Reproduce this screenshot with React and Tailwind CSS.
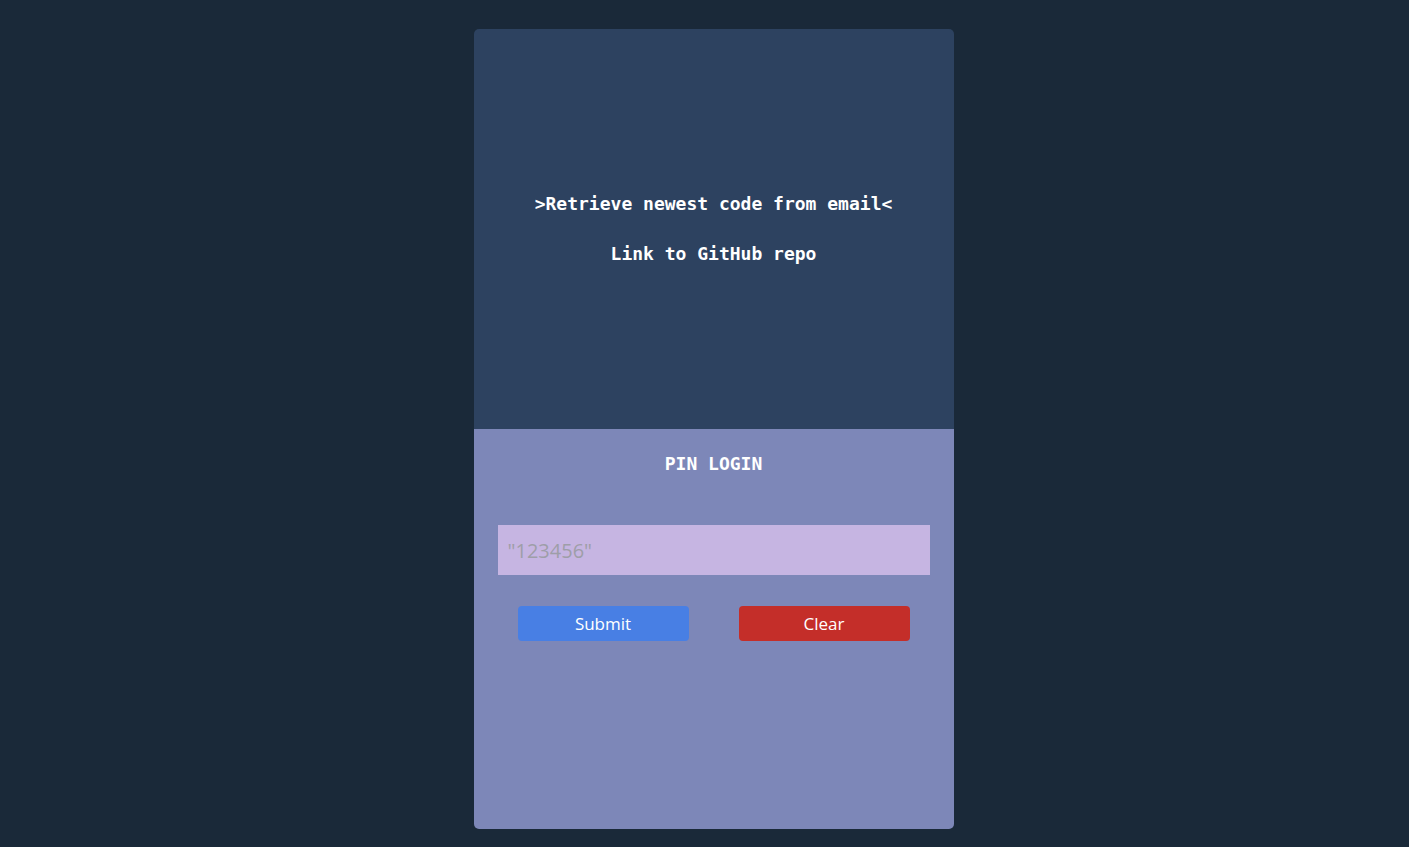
export default function App() {
  return (
    <div className="flex min-h-screen w-full justify-center bg-[#1a2939] pl-[18px] pt-[29px]">
      <div className="flex h-[800px] w-[480px] flex-col overflow-hidden rounded-[5px]">
        <div className="flex h-[400px] flex-col items-center justify-center gap-[28px] bg-[#2d4260] font-['DejaVu_Sans_Mono',monospace] text-[18px] font-bold text-white">
          <a className="leading-[22px]">&gt;Retrieve newest code from email&lt;</a>
          <a className="leading-[22px]">Link to GitHub repo</a>
        </div>
        <div className="flex h-[400px] flex-col items-center bg-[#7d87b8]">
          <h2 className="mt-[24px] font-['DejaVu_Sans_Mono',monospace] text-[18px] font-bold leading-[22px] text-white">
            PIN LOGIN
          </h2>
          <input
            className="mt-[50px] h-[50px] w-[432px] bg-[#c6b5e2] px-[10px] font-['Open_Sans',sans-serif] text-[20px] text-gray-700 outline-none placeholder:text-[#9e9ea8]"
            placeholder={'"123456"'}
          />
          <div className="mt-[31px] flex gap-[50px]">
            <button className="h-[35px] w-[171px] rounded-[4px] bg-[#487fe4] font-['Open_Sans',sans-serif] text-[17px] leading-[35px] text-white">
              Submit
            </button>
            <button className="h-[35px] w-[171px] rounded-[4px] bg-[#c42e29] font-['Open_Sans',sans-serif] text-[17px] leading-[35px] text-white">
              Clear
            </button>
          </div>
        </div>
      </div>
    </div>
  );
}
